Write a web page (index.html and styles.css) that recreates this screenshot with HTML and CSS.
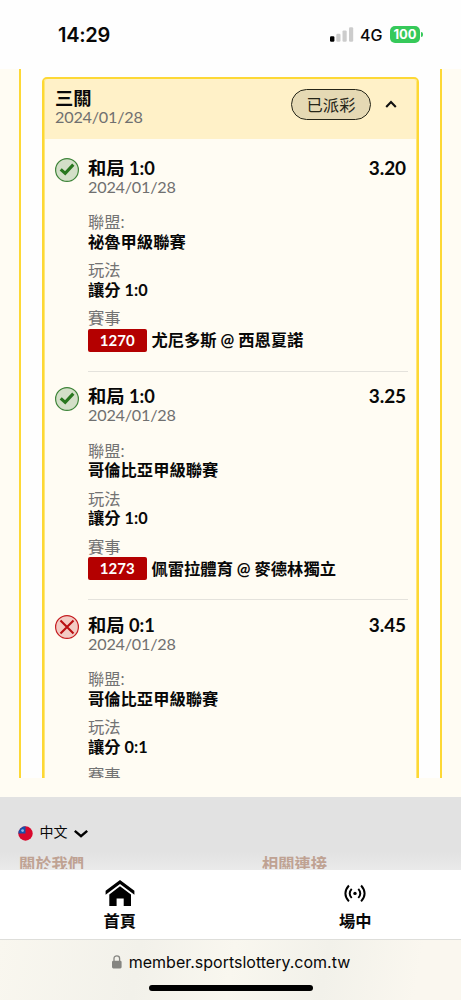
FILE: index.html
```
<!DOCTYPE html>
<html lang="zh-Hant">
<head>
<meta charset="utf-8">
<title>投注紀錄</title>
<link rel="stylesheet" href="styles.css">
</head>
<body>
<header class="status">
  <span class="time">14:29</span>
  <div class="indicators">
    <svg class="signal" width="24" height="15" viewBox="0 0 24 15"><rect x="0" y="9.3" width="4.4" height="5.4" rx="1.2" fill="#000"/><rect x="6.3" y="6.7" width="4.2" height="8" rx="1.2" fill="#ccc"/><rect x="12.5" y="3.4" width="4.2" height="11.3" rx="1.2" fill="#ccc"/><rect x="19" y="0.2" width="4.2" height="14.5" rx="1.2" fill="#ccc"/></svg>
    <span class="network">4G</span>
    <span class="battery">100</span><i class="battery-tip"></i>
  </div>
</header>
<main class="page">
  <div class="panel">
    <section class="card">
      <div class="card-head">
        <div class="card-title"><h1>三關</h1><p class="date">2024/01/28</p></div>
        <span class="pill">已派彩</span>
        <svg class="chevron" width="12" height="8" viewBox="0 0 12 8"><path d="M1.200 6.900 6 2l4.800 4.900" fill="none" stroke="#111" stroke-width="2.100"/></svg>
      </div>
      <div class="bets">
        <article class="bet">
          <svg class="mark" viewBox="0 0 24 24"><circle cx="12" cy="12" r="11.400" fill="#d3dfc8" stroke="#3d8438" stroke-width="1.200"/><path d="M5.700 11.400l4.500 4 8.100-8.800" fill="none" stroke="#28761e" stroke-width="3.100"/></svg>
          <div class="detail">
            <div class="bet-head"><h2>和局 1:0</h2><strong>3.20</strong></div>
            <p class="date">2024/01/28</p>
            <dl><dt>聯盟:</dt><dd>祕魯甲級聯賽</dd><dt>玩法</dt><dd>讓分 1:0</dd><dt>賽事</dt><dd class="match"><span class="code">1270</span>尤尼多斯 @ 西恩夏諾</dd></dl>
          </div>
        </article>
        <article class="bet">
          <svg class="mark" viewBox="0 0 24 24"><circle cx="12" cy="12" r="11.400" fill="#d3dfc8" stroke="#3d8438" stroke-width="1.200"/><path d="M5.700 11.400l4.500 4 8.100-8.800" fill="none" stroke="#28761e" stroke-width="3.100"/></svg>
          <div class="detail">
            <div class="bet-head"><h2>和局 1:0</h2><strong>3.25</strong></div>
            <p class="date">2024/01/28</p>
            <dl><dt>聯盟:</dt><dd>哥倫比亞甲級聯賽</dd><dt>玩法</dt><dd>讓分 1:0</dd><dt>賽事</dt><dd class="match"><span class="code">1273</span>佩雷拉體育 @ 麥德林獨立</dd></dl>
          </div>
        </article>
        <article class="bet">
          <svg class="mark" viewBox="0 0 24 24"><circle cx="12" cy="12" r="11.400" fill="#f3cbc4" stroke="#c51c20" stroke-width="1.200"/><path d="M5.500 5.500l13 13M18.500 5.500L5.500 18.500" fill="none" stroke="#b90f12" stroke-width="2.100"/></svg>
          <div class="detail">
            <div class="bet-head"><h2>和局 0:1</h2><strong>3.45</strong></div>
            <p class="date">2024/01/28</p>
            <dl><dt>聯盟:</dt><dd>哥倫比亞甲級聯賽</dd><dt>玩法</dt><dd>讓分 0:1</dd><dt>賽事</dt></dl>
          </div>
        </article>
      </div>
    </section>
  </div>
</main>
<footer class="footer">
  <div class="language">
    <svg width="15" height="15" viewBox="0 0 15 15"><circle cx="7.500" cy="7.500" r="7.200" fill="#d9082d"/><path d="M7.500.3v7.200H.3A7.200 7.200 0 0 1 7.500.3z" fill="#1650ac"/><circle cx="4.600" cy="4.600" r="1.400" fill="#8fb4e2"/></svg>
    <span>中文</span>
    <svg width="14" height="9" viewBox="0 0 14 9"><path d="M.8 1.900l6.200 5.200 6.200-5.200" fill="none" stroke="#000" stroke-width="2.500"/></svg>
  </div>
  <div class="links"><span>關於我們</span><span>相關連接</span></div>
</footer>
<nav class="tabs">
  <div class="tab home"><svg width="30" height="28" viewBox="0 0 30 28"><path d="M15 .9 L.6 11.700V15.800L15 5.100 29.400 15.800V11.700z"/><path d="M15 7.200L4.300 15.400V27H11.600V19.500H18.700V27H26V15.400z"/></svg><span>首頁</span></div>
  <div class="tab live"><svg width="22" height="28" viewBox="0 0 22 28"><circle cx="11" cy="14.400" r="1.700"/><path d="M7.700 9.800Q3.700 14.400 7.700 19M14.300 9.800Q18.300 14.400 14.300 19M4.900 6.500Q-2.100 14.400 4.900 22.300M17.100 6.500Q24.100 14.400 17.100 22.300" fill="none" stroke="#000" stroke-width="1.900"/></svg><span>場中</span></div>
</nav>
<div class="browser">
  <div class="address"><svg width="10" height="14" viewBox="0 0 10 14"><rect x="0" y="5.700" width="9.600" height="7.700" rx="1.400" fill="#858581"/><path d="M2 6V3.500C2 .1 7.600.1 7.600 3.500V6" fill="none" stroke="#858581" stroke-width="1.300"/></svg><span>member.sportslottery.com.tw</span></div>
  <div class="home-bar"></div>
</div>
</body>
</html>
```
FILE: styles.css
```
* { box-sizing: border-box; }
body, h1, h2, p, dl, dd { margin: 0; }
body {
  width: 461px;
  height: 1000px;
  overflow: hidden;
  background: #fffcf3;
  color: #080808;
  font-family: Lato, "Noto Sans CJK TC", sans-serif;
  font-size: 16.3px;
}
svg { display: block; flex: none; }
.status {
  display: flex;
  justify-content: space-between;
  height: 69px;
  padding: 22px 38px 0 58px;
  background: #fefefe;
  font-family: Inter, sans-serif;
}
.time { font-size: 20px; line-height: 26px; font-weight: 600; letter-spacing: -.3px; }
.indicators { display: flex; align-items: center; height: 25px; }
.network { width: 24px; margin-left: 6px; font-size: 16px; font-weight: 500; }
.battery {
  width: 30px;
  height: 17px;
  margin-left: 6px;
  border-radius: 5px;
  background: #36c95a;
  color: #fff;
  font-size: 13px;
  font-weight: 700;
  line-height: 17px;
  text-align: center;
}
.battery-tip { width: 2px; height: 5px; margin-left: 1px; border-radius: 0 2px 2px 0; background: #36c95a; }
.page { height: 728px; padding: 0 19px 19px; }
.panel {
  height: 709px;
  padding: 8px 21px 0;
  overflow: hidden;
  border: solid #fdd835;
  border-width: 0 2px;
  background: #fefefe;
}
.card { height: 980px; border: 2px solid #fdd835; border-radius: 5px; background: #fffcf3; box-shadow: inset 1px 0 #ffe67a, inset -1px 0 #ffe67a; }
.card-head {
  display: flex;
  height: 60px;
  padding: 9px 20px 0 11px;
  border-radius: 3px 3px 0 0;
  background: #fff1c8;
  box-shadow: inset 1px 0 #ffe67a, inset -1px 0 #ffe67a;
}
.card-title { flex: 1; }
h1, h2 { font-size: 18.300px; line-height: 20px; font-weight: 700; white-space: nowrap; }
.date { color: #707070; font-size: 16.200px; line-height: 18px; letter-spacing: -.2px; }
.pill {
  width: 80px;
  height: 31px;
  margin-top: 1px;
  border: 1.300px solid #252518;
  border-radius: 16px;
  background: #e5d9b4;
  color: #252518;
  text-align: center;
  line-height: 29px;
}
.chevron { margin: 12px 0 0 14px; }
.bets { padding: 4px 9px 0 11px; }
.bet { display: flex; gap: 9px; height: 228.700px; }
.mark { width: 24px; height: 24px; margin-top: 15px; }
.detail { flex: 1; padding-top: 14.500px; border-bottom: 1px solid #e4e2dc; }
.bet-head { display: flex; justify-content: space-between; padding-right: 2px; }
.bet-head strong { font-size: 19px; line-height: 20px; letter-spacing: -.1px; }
dl { margin-top: 16.500px; }
dt { color: #737373; line-height: 19.500px; }
dd { margin-bottom: 8.500px; line-height: 20px; font-weight: 700; white-space: nowrap; }
.match { display: flex; align-items: center; gap: 5px; height: 24px; padding-top: 1px; }
.code {
  width: 58.500px;
  height: 23px;
  border-radius: 2px;
  background: #b40000;
  color: #fff;
  text-align: center;
  line-height: 23px;
  font-size: 15px;
}
.footer { height: 73px; padding: 27px 18px 0; overflow: hidden; background: linear-gradient(#e2e2e2 75%, #eaeaea); }
.language { display: flex; align-items: center; gap: 6.500px; height: 18px; font-size: 14px; }
.language span { line-height: 18px; margin-top: -2px; }
.links { display: grid; grid-template-columns: 243px 1fr; margin-top: 10px; padding-left: 1px; color: #bfa293; font-size: 16.300px; font-weight: 700; line-height: 24px; height: 17px; overflow: hidden; }
.tabs { display: grid; grid-template-columns: 1fr 1fr; height: 70px; padding: 9px 0 0 2px; border-bottom: 1px solid #dededa; background: #fff; font-weight: 700; }
.tab { display: flex; flex-direction: column; align-items: center; gap: 2px; line-height: 24px; }
.home { padding-left: 6px; }
.live { padding-left: 18px; }
.browser { display: flex; flex-direction: column; align-items: center; gap: 12px; height: 61px; padding-top: 11px; background: linear-gradient(100deg, #f9f7ef, #f2f1ea 30%, #f9f7ef 50%, #f2f1ea 70%, #faf7ef 90%); }
.address { display: flex; align-items: center; gap: 7px; height: 22px; padding-left: 1px; font-family: Inter, sans-serif; font-size: 16px; }
.home-bar { width: 164px; height: 6px; border-radius: 3px; background: #000; }
```
